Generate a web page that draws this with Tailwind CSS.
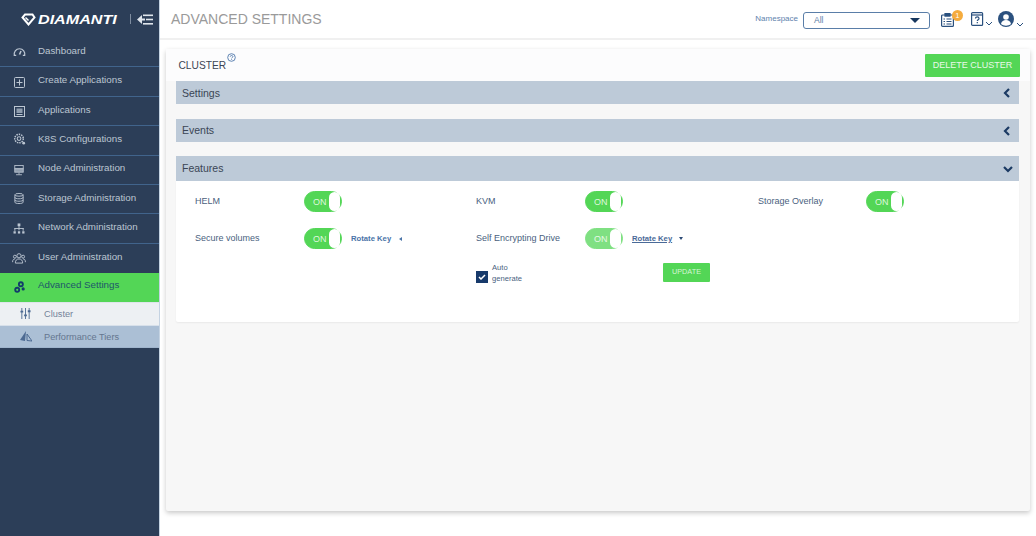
<!DOCTYPE html>
<html lang="en">
<head>
  <meta charset="UTF-8">
  <title>Advanced Settings</title>
  <script src="https://cdn.jsdelivr.net/npm/@tailwindcss/browser@4"></script>
</head>
<body class="bg-white font-['Liberation_Sans',sans-serif] overflow-hidden">
<div class="flex h-[536px] w-[1036px]">
  <!-- Sidebar -->
  <aside class="w-[160px] shrink-0 bg-[#2c3e58] border-r border-[#c5d3e2]">
    <div class="h-[38px] flex items-center pl-[21px]">
      <svg class="shrink-0" width="15" height="13" viewBox="0 0 15 13" fill="none" stroke="#fff" stroke-width="2"><path d="M4 1.500h7.500l2 3L7.500 11.500 1.500 4.500z"/><path d="M4.500 4.500l3 3" stroke-width="1.400"/></svg>
      <span class="ml-[2px] w-[79px] shrink-0 scale-x-[1.240] origin-left italic font-bold text-white text-[13px] leading-none whitespace-nowrap">DIAMANTI</span>
      <span class="ml-[13px] w-px h-[10px] bg-[#7f8da0]"></span>
      <svg class="ml-[6px]" width="16" height="11" viewBox="0 0 16 11" fill="#dfe5ec"><path d="M0 5.500 5 1v9z"/><rect x="5" y="4.500" width="3" height="2"/><rect x="6" y="0.500" width="10" height="1.600"/><rect x="9" y="4.700" width="7" height="1.600"/><rect x="6" y="9" width="10" height="1.600"/></svg>
    </div>
    <nav class="text-[9.750px] text-[#bcc6d2]">
      <a class="flex h-[29.400px] border-b border-[#41648c]">
        <span class="w-[38px] flex justify-center pt-[9px]"><svg width="13" height="9" viewBox="0 0 13 9" fill="none" stroke="#bcc6d2" stroke-width="1.200"><path d="M1.400 8.500a5.300 5.300 0 1 1 10.200 0"/><path d="M6.500 7.500 8 4" stroke-width="1.600"/><path d="M.8 8.400h2.400M9.800 8.400h2.400"/></svg></span>
        <span class="pt-[6px] leading-[13px]">Dashboard</span>
      </a>
      <a class="flex h-[29.400px] border-b border-[#41648c]">
        <span class="w-[38px] flex justify-center pt-[10px]"><svg width="11" height="11" viewBox="0 0 11 11" fill="none" stroke="#bcc6d2" stroke-width="1"><rect x="0.500" y="0.500" width="10" height="10" rx="1"/><path d="M5.500 2.500v6M2.500 5.500h6"/></svg></span>
        <span class="pt-[6px] leading-[13px]">Create Applications</span>
      </a>
      <a class="flex h-[29.400px] border-b border-[#41648c]">
        <span class="w-[38px] flex justify-center pt-[9px]"><svg width="11" height="11" viewBox="0 0 11 11" fill="none" stroke="#bcc6d2" stroke-width="1"><rect x="0.500" y="0.500" width="10" height="10"/><rect x="2.500" y="2.500" width="6" height="4.500" fill="#8f9dae" stroke="none"/><path d="M2.500 8.500h6"/></svg></span>
        <span class="pt-[6px] leading-[13px]">Applications</span>
      </a>
      <a class="flex h-[29.400px] border-b border-[#41648c]">
        <span class="w-[38px] flex justify-center pt-[7px]"><svg width="13" height="13" viewBox="0 0 13 14" fill="none" stroke="#bcc6d2" stroke-width="1.100"><circle cx="6" cy="6" r="2"/><circle cx="6" cy="6" r="4.600" stroke-width="1.600" stroke-dasharray="1.600 1"/><circle cx="11" cy="11" r="1.500" fill="#bcc6d2" stroke="none"/></svg></span>
        <span class="pt-[6px] leading-[13px]">K8S Configurations</span>
      </a>
      <a class="flex h-[29.400px] border-b border-[#41648c]">
        <span class="w-[38px] flex justify-center pt-[9px]"><svg width="10" height="11" viewBox="0 0 11 13" fill="none" stroke="#bcc6d2" stroke-width="1"><rect x="0.500" y="0.500" width="10" height="4"/><rect x="0.500" y="4.500" width="10" height="4" fill="#8f9dae"/><path d="M5.500 9v2M2 11.500h7"/></svg></span>
        <span class="pt-[5.500px] leading-[13px]">Node Administration</span>
      </a>
      <a class="flex h-[29.400px] border-b border-[#41648c]">
        <span class="w-[38px] flex justify-center pt-[8px]"><svg width="10" height="11" viewBox="0 0 10 12" fill="none" stroke="#bcc6d2" stroke-width="1"><ellipse cx="5" cy="2" rx="4.500" ry="1.500"/><path d="M.5 2v8c0 1 2 1.500 4.500 1.500S9.500 11 9.500 10V2M.5 4.800c0 1 2 1.500 4.500 1.500s4.500-.5 4.500-1.500M.5 7.500c0 1 2 1.500 4.500 1.500s4.500-.5 4.500-1.500"/></svg></span>
        <span class="pt-[6px] leading-[13px]">Storage Administration</span>
      </a>
      <a class="flex h-[29.400px] border-b border-[#41648c]">
        <span class="w-[38px] flex justify-center pt-[9px]"><svg width="12" height="11" viewBox="0 0 12 12" fill="#bcc6d2"><rect x="4.500" y="0.500" width="3" height="3"/><rect x="5.500" y="3" width="1" height="5"/><rect x="1" y="5.500" width="10" height="1"/><rect x="1" y="5.500" width="1" height="3"/><rect x="10" y="5.500" width="1" height="3"/><rect x="0" y="9" width="2.500" height="2.500"/><rect x="4.800" y="9" width="2.500" height="2.500"/><rect x="9.500" y="9" width="2.500" height="2.500"/></svg></span>
        <span class="pt-[6px] leading-[13px]">Network Administration</span>
      </a>
      <a class="flex h-[29px]">
        <span class="w-[38px] flex justify-center pt-[9px]"><svg width="14" height="11" viewBox="0 0 15 12" fill="none" stroke="#bcc6d2" stroke-width="1"><circle cx="7.500" cy="3" r="2.300"/><path d="M3.500 11c0-3 1.500-4.500 4-4.500s4 1.500 4 4.500z"/><circle cx="3" cy="4" r="1.600"/><circle cx="12" cy="4" r="1.600"/><path d="M.5 10c0-2.500 1-3.500 2.500-3.500M14.500 10c0-2.500-1-3.500-2.500-3.500"/></svg></span>
        <span class="pt-[6px] leading-[13px]">User Administration</span>
      </a>
      <a class="flex h-[29px] bg-[#53d656] text-[#20566a]">
        <span class="w-[38px] flex justify-center pt-[8px]"><svg width="11" height="13" viewBox="0 0 12 14" fill="none" stroke="#123c6b" stroke-width="2"><circle cx="7.500" cy="3.500" r="2.200"/><circle cx="3.500" cy="9.500" r="2.200"/><circle cx="10" cy="8.500" r="1" stroke-width="1.500"/></svg></span>
        <span class="pt-[5.500px] leading-[13px]">Advanced Settings</span>
      </a>
      <a class="flex items-center h-[23px] border-t border-[#dfe5eb] bg-[#edf0f3] text-[#74839a] text-[9.200px]">
        <span class="w-[44px] flex justify-center pl-[7px]"><svg width="11" height="11" viewBox="0 0 11 12" fill="none" stroke="#4d6a92" stroke-width="1"><path d="M1.500 0v12M5.500 0v12M9.500 0v12"/><path d="M0 4h3M4 8h3M8 3.500h3" stroke-width="2"/></svg></span>
        <span class="pt-[2px]">Cluster</span>
      </a>
      <a class="flex items-center h-[23px] border-t border-[#d7e0ea] bg-[#abbfd5] text-[#65768f] text-[9.200px] border-b border-b-[#9fb4cc]">
        <span class="w-[44px] flex justify-center pl-[7px]"><svg width="12" height="11" viewBox="0 0 12 11" fill="#4d6a92"><path d="M6 0 0 9l5 1z"/><path d="M7 3l5 7-5-.5z" fill="none" stroke="#4d6a92"/></svg></span>
        <span class="pt-[3px]">Performance Tiers</span>
      </a>
    </nav>
  </aside>

  <div class="flex-1 min-w-0 flex flex-col">
    <!-- Top bar -->
    <header class="h-[40px] shrink-0 bg-white border-b-2 border-[#f0f0f0] flex items-center pl-[11px]">
      <h1 class="text-[14px] text-[#9a9a9a] leading-none">ADVANCED SETTINGS</h1>
      <span class="ml-auto text-[8px] text-[#5e82ad]">Namespace</span>
      <div class="ml-[5px] mt-[2px] w-[127px] h-[17px] border border-[#5a7ea8] rounded-[3px] flex items-center justify-between pl-[10px] pr-[9px] text-[8.500px] text-[#5a7ea8]">
        <span>All</span>
        <span class="w-0 h-0 border-x-[5px] border-x-transparent border-t-[5px] border-t-[#17375e]"></span>
      </div>
      <span class="relative ml-[11px] mr-[15px] mt-px">
        <svg class="block" width="13" height="14" viewBox="0 0 13 14" fill="none" stroke="#2b517f" stroke-width="1.200"><rect x="0.600" y="2" width="11.800" height="11.400" rx="1"/><rect x="4" y="0.600" width="5" height="2.500" fill="#2b517f"/><path d="M2.500 6h1.500M5.500 6h5M2.500 8.500h1.500M5.500 8.500h5M2.500 11h1.500M5.500 11h5"/></svg>
        <span class="absolute -top-[3px] left-[11px] w-[11px] h-[11px] rounded-full bg-[#f5ac3e] text-white text-[7px] leading-[11px] text-center">1</span>
      </span>
      <span class="ml-[2px] flex items-end">
        <svg width="13" height="14" viewBox="0 0 13 14" fill="none" stroke="#2b517f" stroke-width="1.200"><rect x="0.600" y="0.600" width="11" height="12.800" rx="1"/><path d="M.6 3h11"/><path d="M4.500 6.500c0-2.200 3.500-2.200 3.500 0 0 1.300-1.700 1.300-1.700 2.600M6.300 10v1.200"/></svg>
        <svg class="ml-[1px]" width="8" height="5" viewBox="0 0 8 5" fill="none" stroke="#2b517f" stroke-width="1"><path d="M1 1l3 3 3-3"/></svg>
      </span>
      <span class="ml-[5px] flex items-end mr-[12px]">
        <svg width="16" height="16" viewBox="0 0 16 16"><circle cx="8" cy="8" r="8" fill="#2b517f"/><circle cx="8" cy="6" r="2.800" fill="#fff"/><path d="M3 13c.6-3 2.500-4 5-4s4.400 1 5 4c-2.800 2.300-7.200 2.300-10 0z" fill="#fff"/></svg>
        <svg class="ml-[2px]" width="8" height="5" viewBox="0 0 8 5" fill="none" stroke="#2b517f" stroke-width="1"><path d="M1 1l3 3 3-3"/></svg>
      </span>
    </header>

    <!-- Cluster card -->
    <main class="mx-[6px] mt-[9px] h-[462px] bg-[#f7f7f7] rounded-[2px] shadow-[0_2px_5px_rgba(0,0,0,0.22)] flex flex-col">
      <div class="h-[32px] shrink-0 bg-[#fcfcfd] flex items-start pl-[12.500px] pr-[10px] relative">
        <h2 class="mt-[10px] text-[10.200px] leading-[13px] text-[#3c4655]">CLUSTER</h2>
        <svg class="mt-[4px] ml-[0.500px]" width="9" height="9" viewBox="0 0 9 9" fill="none" stroke="#4f78ab" stroke-width="0.900"><circle cx="4.500" cy="4.500" r="3.800"/><path d="M3.200 3.700c0-1.600 2.700-1.600 2.700 0 0 .9-1.300.9-1.300 1.700M4.600 6v.8"/></svg>
        <button class="absolute right-[10px] top-[5px] h-[23px] w-[95px] bg-[#53d656] rounded-[1px] text-[9px] text-[#e9f9e9]">DELETE CLUSTER</button>
      </div>

      <div class="ml-[10px] mr-[11px] flex flex-col text-[10.500px] text-[#3a4555]">
        <div class="h-[23px] bg-[#bdcad8] flex items-center justify-between pl-[6px] pr-[8px]">
          <span class="pt-[2px]">Settings</span>
          <svg width="8" height="10" viewBox="0 0 8 10" fill="none" stroke="#1b3a63" stroke-width="2.200"><path d="M6 1 2 5l4 4"/></svg>
        </div>
        <div class="mt-[15px] h-[23px] bg-[#bdcad8] flex items-center justify-between pl-[6px] pr-[8px]">
          <span>Events</span>
          <svg width="8" height="10" viewBox="0 0 8 10" fill="none" stroke="#1b3a63" stroke-width="2.200"><path d="M6 1 2 5l4 4"/></svg>
        </div>
        <div class="mt-[14px] h-[25px] bg-[#bdcad8] flex items-center justify-between pl-[6px] pr-[6px]">
          <span>Features</span>
          <svg width="10" height="8" viewBox="0 0 10 8" fill="none" stroke="#1b3a63" stroke-width="2.200"><path d="M1 2l4 4 4-4"/></svg>
        </div>

        <!-- Features panel -->
        <section class="h-[141px] bg-white rounded-b-[2px] shadow-[0_1px_2px_rgba(0,0,0,0.06)] grid grid-cols-[281px_282px_1fr] pl-[19px] text-[9px] text-[#4a5f80]">
          <div>
            <div class="flex items-center h-[21px] mt-[10px]">
              <span class="w-[109px]">HELM</span>
              <span class="w-[38px] h-[21px] rounded-full bg-[#53d656] border border-[#53d656] flex items-center justify-between pl-[8px] text-[9px] text-[#dff7df]"><span class="pt-[2px]">ON</span><span class="w-[11px] h-[19px] mr-px rounded-full bg-white"></span></span>
            </div>
            <div class="flex items-center h-[21px] mt-[16px]">
              <span class="w-[109px]">Secure volumes</span>
              <span class="w-[38px] h-[21px] rounded-full bg-[#53d656] border border-[#53d656] flex items-center justify-between pl-[8px] text-[9px] text-[#dff7df]"><span class="pt-[2px]">ON</span><span class="w-[11px] h-[19px] mr-px rounded-full bg-white"></span></span>
              <span class="ml-[9px] text-[7.700px] font-bold text-[#4a74a8]">Rotate Key</span>
              <span class="ml-[8px] w-0 h-0 border-y-[2.500px] border-y-transparent border-r-[3px] border-r-[#4a74a8]"></span>
            </div>
          </div>
          <div>
            <div class="flex items-center h-[21px] mt-[10px]">
              <span class="w-[109px]">KVM</span>
              <span class="w-[38px] h-[21px] rounded-full bg-[#53d656] border border-[#53d656] flex items-center justify-between pl-[8px] text-[9px] text-[#dff7df]"><span class="pt-[2px]">ON</span><span class="w-[11px] h-[19px] mr-px rounded-full bg-white"></span></span>
            </div>
            <div class="flex items-center h-[21px] mt-[16px]">
              <span class="w-[109px]">Self Encrypting Drive</span>
              <span class="w-[38px] h-[21px] rounded-full bg-[#7fe082] border border-[#7fe082] flex items-center justify-between pl-[8px] text-[9px] text-[#e6f9e6]"><span class="pt-[2px]">ON</span><span class="w-[11px] h-[19px] mr-px rounded-full bg-white"></span></span>
              <span class="ml-[9px] text-[7.700px] font-bold text-[#4a6a98] underline">Rotate Key</span>
              <span class="ml-[7px] w-0 h-0 border-x-[2.500px] border-x-transparent border-t-[3px] border-t-[#2b4a75]"></span>
            </div>
            <div class="flex mt-[14px] relative h-[20px]">
              <span class="self-end w-[12px] h-[12px] bg-[#173a6b] flex items-center justify-center"><svg width="8" height="6" viewBox="0 0 8 6" fill="none" stroke="#fff" stroke-width="1.500"><path d="M1 3l2 2 4-4"/></svg></span>
              <span class="ml-[4px] text-[7.600px] leading-[10.500px] text-[#4a5f80]">Auto<br>generate</span>
              <button class="absolute left-[187px] top-0 w-[47px] h-[19px] bg-[#53d656] rounded-[1px] text-[7.300px] text-[#d6f5d6]">UPDATE</button>
            </div>
          </div>
          <div>
            <div class="flex items-center h-[21px] mt-[10px]">
              <span class="w-[108px]">Storage Overlay</span>
              <span class="w-[38px] h-[21px] rounded-full bg-[#53d656] border border-[#53d656] flex items-center justify-between pl-[8px] text-[9px] text-[#dff7df]"><span class="pt-[2px]">ON</span><span class="w-[11px] h-[19px] mr-px rounded-full bg-white"></span></span>
            </div>
          </div>
        </section>
      </div>
    </main>
  </div>
</div>
</body>
</html>
